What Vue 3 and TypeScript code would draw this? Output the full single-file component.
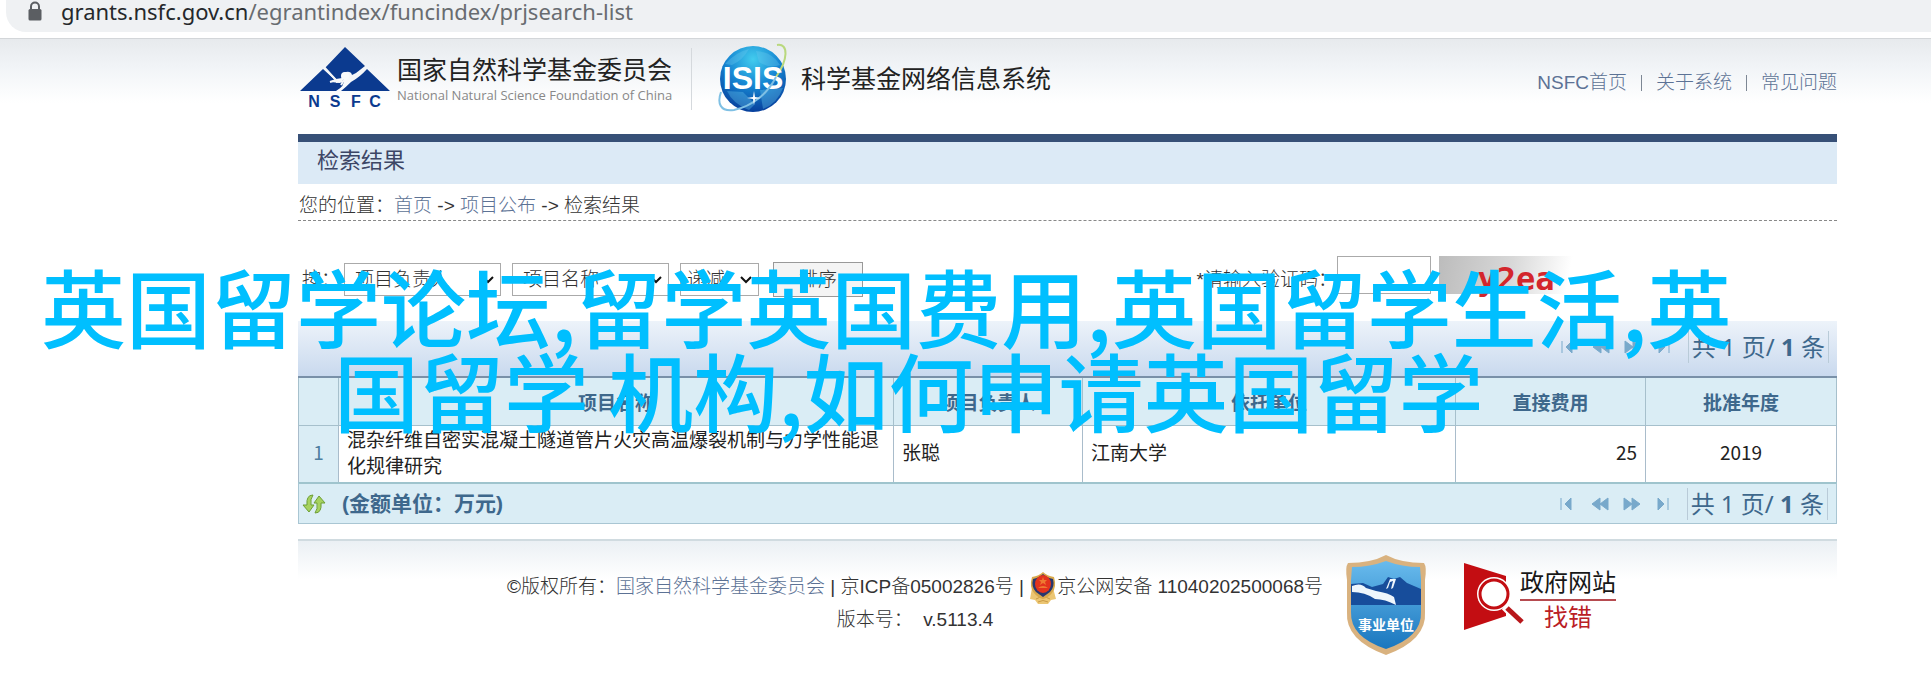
<script setup lang="ts">
import { ref } from 'vue'

interface Project {
  name: string
  leader: string
  unit: string
  amount: number
  year: number
}

const projects: Project[] = [
  { name: '混杂纤维自密实混凝土隧道管片火灾高温爆裂机制与力学性能退化规律研究', leader: '张聪', unit: '江南大学', amount: 25, year: 2019 },
]
const navLinks = ['NSFC首页', '关于系统', '常见问题']
const columns = ['项目名称', '项目负责人', '依托单位', '直接费用', '批准年度']
const pagerButtons = [
  { label: '首页', d: 'M2 2v12M12 2v12L6 8z' },
  { label: '上一页', d: 'M9 2v12L1 8zM17 2v12L9 8z' },
  { label: '下一页', d: 'M1 2v12l8-6zM9 2v12l8-6z' },
  { label: '末页', d: 'M3 2v12l6-6zM13 2v12' },
]
const firstKey = ref('项目负责人')
const secondKey = ref('项目名称')
const order = ref('递减')
const captcha = ref('')
</script>

<template>
  <div class="page">
    <div class="address">
      <div class="address-field">
        <svg class="lock" viewBox="0 0 14 20" aria-hidden="true">
          <path d="M3 9V5.500a4 4 0 0 1 8 0V9" fill="none" stroke="#5b5e62" stroke-width="2" />
          <rect x="0.500" y="8" width="13" height="11.500" rx="1.500" fill="#5b5e62" />
        </svg>
        <span class="url"><b>grants.nsfc.gov.cn</b>/egrantindex/funcindex/prjsearch-list</span>
      </div>
    </div>

    <div class="site">
      <header class="masthead">
        <svg class="nsfc" viewBox="0 0 90 64" role="img" aria-label="NSFC">
          <path d="M45 0 65 19 56 26 52 28Q51 24 46 25 40 26 42 31L36 32 25 21z" fill="#0b3a8f" />
          <path d="M23 22 35 33 31 35 40 36 44 32Q45 39 36 44H0z" fill="#0b3a8f" />
          <path d="M67 22 90 44H41Q46 40 51 35 60 30 67 22z" fill="#0b3a8f" />
          <path d="M24 20 36 33 30 35M66 20Q60 28 51 32M44 33 41 38M36 35l7-1" fill="none" stroke="#f4f6f8" stroke-width="2" />
          <circle cx="45" cy="29" r="4" fill="#f8fafb" />
          <text x="14" y="60">N</text>
          <text x="35" y="60">S</text>
          <text x="56" y="60">F</text>
          <text x="75" y="60">C</text>
        </svg>
        <div class="org">
          <strong>国家自然科学基金委员会</strong>
          <span>National Natural Science Foundation of China</span>
        </div>
        <i class="rule"></i>
        <svg class="globe" viewBox="0 0 72 72" role="img" aria-label="ISIS">
          <defs>
            <radialGradient id="sea" cx="50%" cy="20%" r="80%">
              <stop offset="0" stop-color="#42ccee" />
              <stop offset="0.500" stop-color="#1686d2" />
              <stop offset="1" stop-color="#073f9c" />
            </radialGradient>
          </defs>
          <circle cx="35" cy="36" r="33" fill="url(#sea)" />
          <path d="M7 21Q18 9 31 6 25 17 14 22zM38 8Q54 9 62 22 51 26 41 19zM9 48l16 1 12 12-6 6Q15 61 9 48zM42 47l23-2Q59 61 45 66z" fill="#6bc9ee" opacity="0.350" />
          <path d="M59 2C71 0 70 17 58 34" fill="none" stroke="#b9d87e" stroke-width="2" />
          <text x="35" y="46" text-anchor="middle" class="globe-text">ISIS</text>
          <path d="M3 49C-1 60 2 69 16 67 35 63 50 50 58 34" fill="none" stroke="#7fc0e4" stroke-width="2" />
          <path d="M36 48l1 6 6 1-6 1-1 6-1-6-6-1 6-1z" fill="#fff" />
        </svg>
        <h1>科学基金网络信息系统</h1>
        <nav>
          <template v-for="(link, i) in navLinks" :key="link">
            <i v-if="i > 0"></i>
            <a href="#">{{ link }}</a>
          </template>
        </nav>
      </header>

      <h2>检索结果</h2>
      <p class="crumbs">您的位置：<a href="#">首页</a> <b>-&gt;</b> <a href="#">项目公布</a> <b>-&gt;</b> 检索结果</p>

      <form class="sorting" @submit.prevent>
        <label class="first-label" for="first-key">按：</label>
        <span class="select">
          <select id="first-key" v-model="firstKey"><option>项目负责人</option></select>
          <svg viewBox="0 0 14 10" aria-hidden="true"><path d="M2 2l5 5 5-5" /></svg>
        </span>
        <span class="select">
          <select v-model="secondKey" aria-label="第二排序项"><option>项目名称</option></select>
          <svg viewBox="0 0 14 10" aria-hidden="true"><path d="M2 2l5 5 5-5" /></svg>
        </span>
        <span class="select short">
          <select v-model="order" aria-label="排序方式"><option>递减</option><option>递增</option></select>
          <svg viewBox="0 0 14 10" aria-hidden="true"><path d="M2 2l5 5 5-5" /></svg>
        </span>
        <button type="submit">排序</button>
        <label class="captcha-label" for="captcha">*请输入验证码：</label>
        <input id="captcha" v-model="captcha" type="text">
        <span class="captcha">y2ea</span>
      </form>

      <div class="grid">
        <div class="bar top">
          <div class="pager">
            <button v-for="b in pagerButtons" :key="b.label" type="button" :aria-label="b.label">
              <svg viewBox="0 0 18 16"><path :d="b.d" /></svg>
            </button>
            <span>共 1 页/ <b>1</b> 条</span>
          </div>
        </div>
        <table>
          <colgroup>
            <col class="c-no"><col class="c-name"><col class="c-leader"><col class="c-unit"><col class="c-amount"><col class="c-year">
          </colgroup>
          <thead>
            <tr>
              <th></th>
              <th v-for="c in columns" :key="c">{{ c }}</th>
            </tr>
          </thead>
          <tbody>
            <tr v-for="(p, i) in projects" :key="p.name">
              <td class="no">{{ i + 1 }}</td>
              <td>{{ p.name }}</td>
              <td>{{ p.leader }}</td>
              <td>{{ p.unit }}</td>
              <td class="amount">{{ p.amount }}</td>
              <td class="year">{{ p.year }}</td>
            </tr>
          </tbody>
        </table>
        <div class="bar bottom">
          <button class="refresh" type="button" aria-label="刷新">
            <svg viewBox="0 0 24 20">
              <path d="M11 1Q4 1 5 11H1l6 7 5-7H9Q8 5 11 1z" fill="#a6d25f" stroke="#6d9f35" />
              <path d="M13 19q7 0 6-10h4l-6-7-5 7h3q1 6-2 10z" fill="#a6d25f" stroke="#6d9f35" />
            </svg>
          </button>
          <strong>(金额单位：万元)</strong>
          <div class="pager">
            <button v-for="b in pagerButtons" :key="b.label" type="button" :aria-label="b.label">
              <svg viewBox="0 0 18 16"><path :d="b.d" /></svg>
            </button>
            <span>共 1 页/ <b>1</b> 条</span>
          </div>
        </div>
      </div>

      <footer>
        <div class="legal">
          <p>
            ©版权所有：<a href="#">国家自然科学基金委员会</a> | 京ICP备05002826号 |
            <svg class="police" viewBox="0 0 28 32" aria-hidden="true">
              <path d="M3 16 1 27l5 1 3 4h10l3-4 5-1-3-11z" fill="#ecc673" />
              <path d="M7 27q7-4 14 0M9 30q5-3 10 0" fill="none" stroke="#c99a45" />
              <path d="M14 0Q18 4 25 5 28 15 23 21 19 26 14 27 9 26 5 21 0 15 3 5 10 4 14 0z" fill="#d9a94c" />
              <path d="M14 2Q18 6 24 7 26 15 21 20L14 25 7 20Q2 15 4 7 10 6 14 2z" fill="#28376f" />
              <ellipse cx="14" cy="12" rx="8" ry="9" fill="#e3331d" />
              <path d="M14 5l1 3h3l-2 2 1 3-3-2-3 2 1-3-2-2h3zM9 16q5-4 10 0z" fill="#ef7a31" />
            </svg><a class="plain" href="#">京公网安备 11040202500068号</a>
          </p>
          <p>版本号：&nbsp; v.5113.4</p>
        </div>
        <svg class="shield" viewBox="0 0 82 100" role="img" aria-label="事业单位">
          <defs>
            <linearGradient id="sky" x1="0" y1="0" x2="0" y2="1">
              <stop offset="0" stop-color="#69bbed" />
              <stop offset="1" stop-color="#1976be" />
            </linearGradient>
          </defs>
          <path d="M41 0Q56 8 79 8 82 12 80 25V57Q82 85 41 100 0 85 2 57V25Q0 12 3 8 26 8 41 0z" fill="#d9b27f" />
          <path d="M41 6Q57 12 75 12L76 25V57Q77 82 41 94 5 82 6 57V25L7 12Q25 12 41 6z" fill="url(#sky)" />
          <path d="M6 29 18 28 27 32 38 29 43 22 49 24 55 22 62 28 76 34V50H6z" fill="#174d9b" />
          <path d="M7 31Q16 27 21 33L31 36Q44 38 49 42L51 50Q40 44 30 44 20 37 7 37zM45 24l-4 10 2-1 2-6 3-1-2 8 2-1 3-9z" fill="#eef6fc" />
          <text x="41" y="75" text-anchor="middle" class="shield-text">事业单位</text>
        </svg>
        <a class="report" href="#" aria-label="政府网站 找错">
          <svg viewBox="0 0 60 68" aria-hidden="true">
            <path d="M0 0 42 13V53L0 67z" fill="#c30d12" />
            <circle cx="30" cy="31" r="17" fill="#fff" />
            <circle cx="30" cy="31" r="14" fill="#fff" stroke="#c30d12" stroke-width="3" />
            <path d="M41 43 59 61" stroke="#fff" stroke-width="9" />
            <path d="M43 45 58 59" stroke="#b8171b" stroke-width="5" />
          </svg>
          <span><b>政府网站</b><em>找错</em></span>
        </a>
      </footer>
    </div>

    <div class="caption">
      <p>英国留学论坛,留学英国费用,英国留学生活,英</p>
      <p class="second">国留学 机构,如何申请英国留学</p>
    </div>
  </div>
</template>

<style>
body {
  margin: 0;
  background: #fff;
}
</style>

<style scoped>
.page {
  position: relative;
  overflow: hidden;
  font-family: "Liberation Sans", "Noto Sans CJK SC", sans-serif;
  font-size: 19px;
  line-height: 28px;
  color: #333;
}
p, h1, h2 {
  margin: 0;
}
h1, h2 {
  font-weight: 400;
}
a {
  color: #5c7295;
  text-decoration: none;
}
button {
  font: inherit;
  cursor: pointer;
}
.address {
  height: 38px;
  padding-left: 6px;
  background: #fff;
  border-bottom: 1px solid #d3d6d9;
}
.address-field {
  display: flex;
  align-items: center;
  gap: 19px;
  height: 22px;
  padding: 0 0 10px 22px;
  background: #eff1f3;
  border-bottom-left-radius: 20px;
}
.lock {
  width: 14px;
  height: 20px;
}
.url {
  font-family: "Noto Sans", sans-serif;
  font-size: 22px;
  color: #686c70;
  white-space: nowrap;
}
.url b {
  font-weight: 400;
  color: #25282b;
}
.site {
  padding: 0 94px 0 298px;
  background: linear-gradient(#e7eaed, #f1f4f7 28px, #fff 64px);
}
.masthead {
  display: flex;
  align-items: center;
  height: 80px;
  padding-bottom: 15px;
}
.nsfc {
  width: 90px;
  height: 64px;
  margin-left: 2px;
}
.nsfc text {
  font-family: "Liberation Sans", sans-serif;
  font-weight: 700;
  font-size: 16px;
  text-anchor: middle;
  fill: #0b3a8f;
}
.org {
  display: flex;
  flex-direction: column;
  width: 286px;
  margin-left: 7px;
  padding-top: 4px;
  white-space: nowrap;
}
.org strong {
  font-size: 25px;
  font-weight: 400;
  color: #222;
}
.org span {
  font-family: "Open Sans", sans-serif;
  font-size: 13px;
  line-height: 22px;
  color: #888;
}
.rule {
  width: 1px;
  height: 62px;
  margin-left: 8px;
  background: #d5d9dd;
}
.globe {
  width: 72px;
  height: 72px;
  margin-left: 26px;
}
.globe-text {
  font-family: "Liberation Sans", sans-serif;
  font-weight: 700;
  font-size: 32px;
  fill: #fff;
}
h1 {
  margin-left: 11px;
  font-size: 25px;
  color: #222;
  white-space: nowrap;
}
nav {
  display: flex;
  align-items: center;
  gap: 14px;
  margin-left: auto;
  padding-top: 8px;
  font-weight: 300;
  white-space: nowrap;
}
nav i {
  width: 1px;
  height: 16px;
  background: #7d8794;
}
h2 {
  padding: 3px 19px 7px;
  border-top: 8px solid #375077;
  background: #dceaf6;
  font-size: 22px;
  line-height: 32px;
  color: #3c4666;
}
.crumbs {
  height: 36px;
  padding-left: 1px;
  border-bottom: 1px dashed #888;
  font-weight: 300;
  line-height: 44px;
}
.sorting {
  display: flex;
  align-items: center;
  height: 51px;
  padding: 33px 0 16px 4px;
  font-weight: 300;
}
.first-label {
  margin-right: 4px;
}
.select {
  position: relative;
  margin-right: 11px;
}
.select select {
  appearance: none;
  width: 157px;
  height: 33px;
  padding: 0 10px;
  border: 1px solid #aaa;
  border-radius: 0;
  background: #fff;
  font: inherit;
  color: #333;
}
.select.short select {
  width: 79px;
  padding: 0 6px;
}
.select svg {
  position: absolute;
  right: 6px;
  top: 12px;
  width: 14px;
  height: 10px;
  fill: none;
  stroke: #111;
  stroke-width: 2;
  pointer-events: none;
}
.sorting > button {
  width: 90px;
  height: 35px;
  margin-left: 3px;
  padding: 0;
  border: 1px solid #999;
  background: #f4f4f4;
  color: #333;
}
.captcha-label {
  margin-left: auto;
}
.sorting input {
  box-sizing: border-box;
  width: 94px;
  height: 38px;
  margin: 0 8px 10px 0;
  border: 1px solid #aaa;
  font: inherit;
}
.captcha {
  box-sizing: border-box;
  width: 142px;
  height: 38px;
  margin: 0 256px 10px 0;
  padding-left: 12px;
  background: linear-gradient(100deg, #bcbcbc, #d8d8d8 50%, #fff 90%);
  font-family: "DejaVu Sans Mono", monospace;
  font-weight: 700;
  font-size: 32px;
  line-height: 46px;
  text-align: center;
  color: #d3262c;
}
.bar {
  display: flex;
  align-items: center;
  color: #3e688c;
}
.top {
  height: 51px;
  padding-bottom: 4px;
  border-bottom: 2px solid #7990a8;
  background: linear-gradient(#edf3fa, #c9d9ee);
}
.bottom {
  height: 39px;
  border: 1px solid #a9c6d3;
  border-top: 2px solid #9fc4cd;
  background: #daedf5;
  line-height: 36px;
}
.refresh {
  width: 24px;
  height: 22px;
  margin: 0 16px 0 3px;
  padding: 0;
  border: 0;
  background: none;
}
.refresh svg {
  display: block;
  width: 24px;
  height: 22px;
}
.bottom strong {
  font-size: 21px;
}
.pager {
  display: flex;
  align-items: center;
  gap: 14px;
  margin-left: auto;
  margin-right: 8px;
}
.pager button {
  width: 18px;
  height: 16px;
  padding: 0;
  border: 0;
  background: none;
}
.pager svg {
  display: block;
  width: 18px;
  height: 16px;
  fill: #78a9cb;
  stroke: #78a9cb;
}
.pager span {
  padding: 0 3px;
  border: solid #b9cbd8;
  border-width: 0 1px;
  font-family: "Noto Sans", "Noto Sans CJK SC", sans-serif;
  font-size: 24px;
  line-height: 32px;
  white-space: nowrap;
}
table {
  width: 100%;
  table-layout: fixed;
  border-collapse: collapse;
  font-family: "Noto Sans CJK SC", sans-serif;
}
.c-no {
  width: 40px;
}
.c-leader {
  width: 189px;
}
.c-unit {
  width: 373px;
}
.c-amount {
  width: 190px;
}
.c-year {
  width: 191px;
}
th {
  height: 47px;
  padding: 0;
  border: 1px solid #a6c0cc;
  border-top: 0;
  background: #daedf5;
  color: #3e688c;
}
td {
  height: 52px;
  padding: 0 8px 4px;
  border: 1px solid #a9bccb;
  border-bottom: 0;
  line-height: 26px;
  color: #222;
}
.no {
  padding: 0 0 4px;
  background: #daedf5;
  text-align: center;
  color: #4f7fa0;
}
.amount {
  text-align: right;
}
.year {
  text-align: center;
}
footer {
  display: flex;
  align-items: flex-start;
  margin-top: 15px;
  padding: 14px 0 22px 209px;
  border-top: 2px solid #d0dbe0;
  background: linear-gradient(#ebf0f4, #fff 38px);
}
.legal {
  padding-top: 16px;
  font-weight: 300;
  line-height: 32px;
  text-align: center;
  white-space: nowrap;
}
.legal .plain {
  color: inherit;
}
.police {
  width: 28px;
  height: 32px;
  vertical-align: middle;
}
.shield {
  width: 82px;
  height: 100px;
  margin-left: 22px;
}
.shield-text {
  font-family: "Noto Sans CJK SC", sans-serif;
  font-weight: 700;
  font-size: 14px;
  fill: #fff;
}
.report {
  display: flex;
  margin: 8px 0 0 37px;
}
.report svg {
  width: 60px;
  height: 68px;
}
.report span {
  display: flex;
  flex-direction: column;
  align-items: center;
  padding-top: 4px;
  margin-left: -4px;
}
.report b {
  border-bottom: 2px solid #b64b50;
  font-size: 24px;
  font-weight: 400;
  line-height: 32px;
  color: #181818;
}
.report em {
  font-size: 24px;
  font-style: normal;
  line-height: 34px;
  color: #ba2025;
}
/* Headline laid over the page */
.caption {
  position: absolute;
  top: 263px;
  left: 41px;
  font-family: "Noto Sans CJK SC", sans-serif;
  font-weight: 500;
  font-size: 85px;
  line-height: 84px;
  color: #00bfff;
  white-space: nowrap;
  pointer-events: none;
}
.second {
  padding-left: 293px;
}
</style>
